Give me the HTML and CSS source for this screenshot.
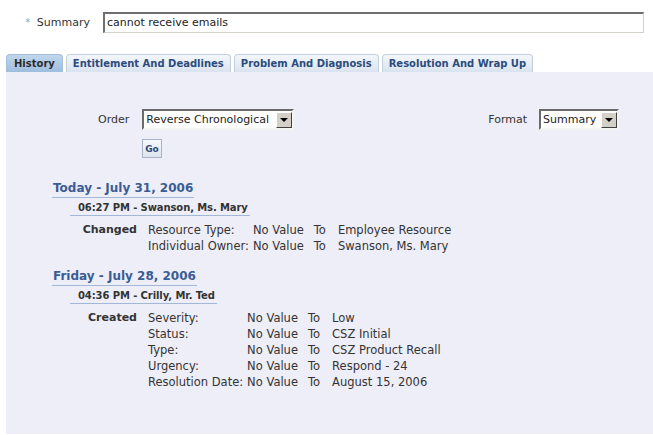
FILE: index.html
```html
<!DOCTYPE html>
<html lang="en">
<head>
    <meta charset="UTF-8">
    <title>Service Request - History</title>
    <link rel="stylesheet" href="styles.css">
</head>
<body>

<div class="summary-row">
    <label class="summary-label" for="summary"><span class="req">*</span> Summary</label>
    <div class="text-input" id="summary">cannot receive emails</div>
</div>

<div class="tabs">
    <div class="tab active">History</div>
    <div class="tab">Entitlement And Deadlines</div>
    <div class="tab">Problem And Diagnosis</div>
    <div class="tab">Resolution And Wrap Up</div>
</div>

<div class="panel">
    <div class="controls">
        <div class="ctl-order">
            <span class="ctl-label">Order</span>
            <div class="select sel-order">
                <span class="sel-text">Reverse Chronological</span>
                <span class="sel-arrow"></span>
            </div>
        </div>
        <div class="ctl-format">
            <span class="ctl-label">Format</span>
            <div class="select sel-format">
                <span class="sel-text">Summary</span>
                <span class="sel-arrow"></span>
            </div>
        </div>
    </div>
    <div class="go-row">
        <button class="go">Go</button>
    </div>

    <div class="day first">
        <h2 class="day-title">Today - July 31, 2006</h2>
        <div class="entry-title">06:27 PM - Swanson, Ms. Mary</div>
        <div class="entry">
            <div class="action">Changed</div>
            <table class="changes">
                <tr><td>Resource Type:</td><td>No Value</td><td>To</td><td>Employee Resource</td></tr>
                <tr><td>Individual Owner:</td><td>No Value</td><td>To</td><td>Swanson, Ms. Mary</td></tr>
            </table>
        </div>
    </div>

    <div class="day">
        <h2 class="day-title">Friday - July 28, 2006</h2>
        <div class="entry-title">04:36 PM - Crilly, Mr. Ted</div>
        <div class="entry">
            <div class="action">Created</div>
            <table class="changes">
                <tr><td>Severity:</td><td>No Value</td><td>To</td><td>Low</td></tr>
                <tr><td>Status:</td><td>No Value</td><td>To</td><td>CSZ Initial</td></tr>
                <tr><td>Type:</td><td>No Value</td><td>To</td><td>CSZ Product Recall</td></tr>
                <tr><td>Urgency:</td><td>No Value</td><td>To</td><td>Respond - 24</td></tr>
                <tr><td>Resolution Date:</td><td>No Value</td><td>To</td><td>August 15, 2006</td></tr>
            </table>
        </div>
    </div>
</div>

</body>
</html>
```

FILE: styles.css
```css
body {
    margin: 0;
    font-family: "DejaVu Sans", Tahoma, sans-serif;
    font-size: 11px;
    color: #333;
    background-color: #fff;
}

.summary-row {
    display: flex;
    align-items: center;
    padding-top: 12px;
}

.summary-label {
    width: 90px;
    text-align: right;
    margin-right: 13px;
    font-size: 11px;
    color: #333;
}

.req {
    color: #8aa6cc;
    font-size: 10px;
    margin-right: 3px;
}

.text-input {
    width: 536px;
    height: 18px;
    line-height: 18px;
    padding-left: 2px;
    font-size: 11px;
    color: #222;
    background-color: #fff;
    border-top: 2px solid #6f6f6f;
    border-left: 2px solid #6f6f6f;
    border-bottom: 1px solid #d4d0c8;
    border-right: 1px solid #d4d0c8;
}

.tabs {
    display: flex;
    gap: 3px;
    margin-top: 21px;
    margin-left: 6px;
}

.tab {
    height: 17px;
    line-height: 18px;
    padding: 0 6px;
    font-weight: bold;
    font-size: 10px;
    color: #2c4b7c;
    border: 1px solid #c3cfdd;
    border-bottom: none;
    border-radius: 4px 4px 0 0;
    background: linear-gradient(#f4f7fb, #d9e3ef);
}

.tab.active {
    padding: 0 7px;
    color: #2b2b2b;
    border-color: #a3bfdc;
    background: linear-gradient(#c0d6ec, #9ebedf);
}

.panel {
    margin-left: 6px;
    height: 362px;
    background-color: #eeeef8;
}

.controls {
    display: flex;
    padding-top: 37px;
}

.ctl-order,
.ctl-format {
    display: flex;
    align-items: center;
}

.ctl-order {
    margin-left: 92px;
}

.ctl-format {
    margin-left: auto;
    margin-right: 34px;
}

.ctl-label {
    font-size: 11px;
    margin-right: 12px;
    color: #333;
}

.ctl-order .ctl-label {
    margin-right: 13px;
}

.select {
    display: flex;
    align-items: center;
    height: 17px;
    background-color: #fff;
    border-top: 2px solid #6a6a6a;
    border-left: 2px solid #6a6a6a;
    border-bottom: 2px solid #f4f4f4;
    border-right: 2px solid #f4f4f4;
}

.sel-order { width: 148px; }
.sel-format { width: 76px; }

.sel-text {
    flex: 1;
    padding-left: 2px;
    font-size: 11px;
    color: #222;
    white-space: nowrap;
    overflow: hidden;
}

.sel-arrow {
    position: relative;
    width: 14px;
    height: 14px;
    background-color: #d4d0c8;
    border-top: 1px solid #fff;
    border-left: 1px solid #fff;
    border-right: 1px solid #404040;
    border-bottom: 1px solid #404040;
}

.sel-arrow::after {
    content: "";
    position: absolute;
    left: 3px;
    top: 5px;
    border-left: 4px solid transparent;
    border-right: 4px solid transparent;
    border-top: 4px solid #000;
}

.go-row {
    padding-left: 136px;
    margin-top: 9px;
}

.go {
    display: block;
    width: 20px;
    height: 19px;
    padding: 0;
    font-family: "DejaVu Sans", Tahoma, sans-serif;
    font-size: 9px;
    font-weight: bold;
    color: #2c4b7c;
    border: 1px solid #a8b4c6;
    background: linear-gradient(#f6f8fb, #dce4ee);
}

.day {
    padding-left: 46px;
    margin-top: 15px;
}

.day.first {
    margin-top: 23px;
}

.day-title {
    display: inline-block;
    margin: 0;
    padding: 0 1px 1px 1px;
    font-size: 12px;
    line-height: 15px;
    font-weight: bold;
    color: #3a5c94;
    border-bottom: 1px solid #a3b7d6;
}

.entry-title {
    display: table;
    margin-left: 18px;
    margin-top: 4px;
    padding: 0 2px 1px 8px;
    font-size: 10px;
    line-height: 12px;
    font-weight: bold;
    letter-spacing: -0.1px;
    color: #333;
    border-bottom: 1px solid #a3b7d6;
}

.entry {
    display: flex;
    margin-top: 6px;
}

.action {
    width: 85px;
    text-align: right;
    font-size: 11px;
    font-weight: bold;
    line-height: 16px;
    color: #333;
    padding-right: 11px;
}

.changes {
    border-collapse: collapse;
    font-size: 11.5px;
    color: #333;
}

.changes td {
    padding: 0 10px 0 0;
    line-height: 16px;
    white-space: nowrap;
}

.changes td:first-child {
    padding-right: 4px;
}

.changes td:nth-child(3) {
    padding-right: 12px;
}
```
